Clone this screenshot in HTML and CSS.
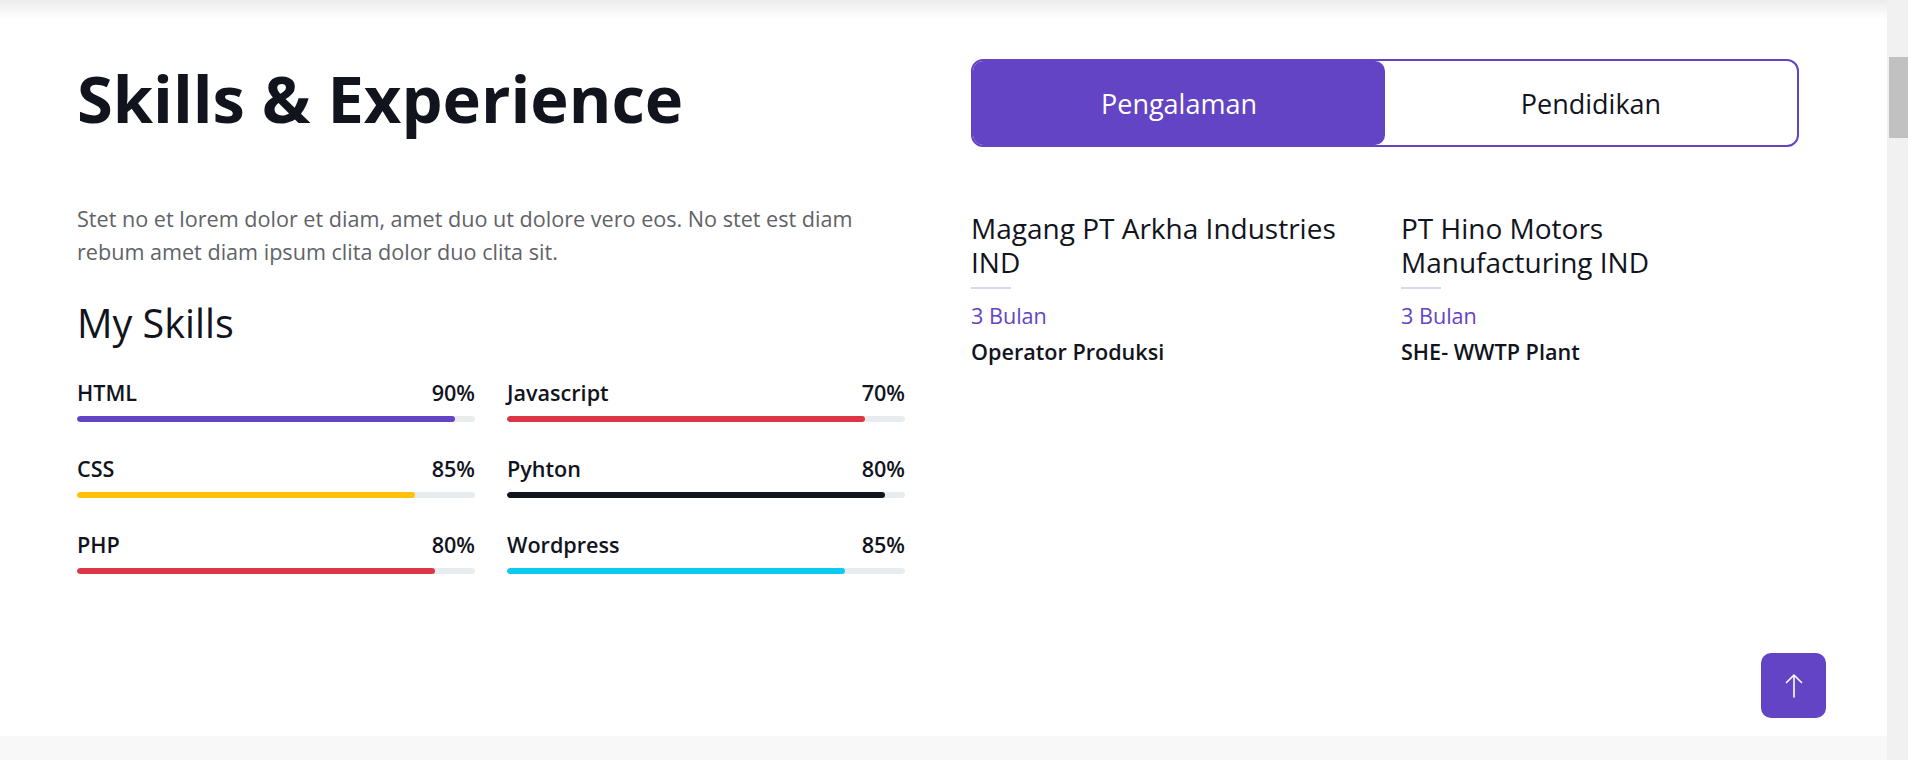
FILE: index.html
```html
<!DOCTYPE html>
<html lang="id">
<head>
<meta charset="utf-8">
<title>Skills &amp; Experience</title>
<link rel="stylesheet" href="styles.css">
</head>
<body>
<div class="viewport">
  <div class="page">
    <div class="topshade"></div>
    <section class="section">
      <div class="col-left">
        <h1 class="title">Skills &amp; Experience</h1>
        <p class="lead-text">Stet no et lorem dolor et diam, amet duo ut dolore vero eos. No stet est diam rebum amet diam ipsum clita dolor duo clita sit.</p>
        <h3 class="sub">My Skills</h3>
        <div class="skills">
          <div class="skill">
            <div class="skill-head"><span>HTML</span><span>90%</span></div>
            <div class="track"><div class="fill fill-primary" style="width:95%"></div></div>
          </div>
          <div class="skill">
            <div class="skill-head"><span>Javascript</span><span>70%</span></div>
            <div class="track"><div class="fill fill-danger" style="width:90%"></div></div>
          </div>
          <div class="skill">
            <div class="skill-head"><span>CSS</span><span>85%</span></div>
            <div class="track"><div class="fill fill-warning" style="width:85%"></div></div>
          </div>
          <div class="skill">
            <div class="skill-head"><span>Pyhton</span><span>80%</span></div>
            <div class="track"><div class="fill fill-dark" style="width:95%"></div></div>
          </div>
          <div class="skill">
            <div class="skill-head"><span>PHP</span><span>80%</span></div>
            <div class="track"><div class="fill fill-danger" style="width:90%"></div></div>
          </div>
          <div class="skill">
            <div class="skill-head"><span>Wordpress</span><span>85%</span></div>
            <div class="track"><div class="fill fill-info" style="width:85%"></div></div>
          </div>
        </div>
      </div>
      <div class="col-right">
        <div class="tabs">
          <button class="tab tab-active" type="button">Pengalaman</button>
          <button class="tab" type="button">Pendidikan</button>
        </div>
        <div class="jobs">
          <div class="job">
            <h5 class="job-title">Magang PT Arkha Industries IND</h5>
            <div class="job-rule"></div>
            <p class="job-dur">3 Bulan</p>
            <p class="job-role">Operator Produksi</p>
          </div>
          <div class="job">
            <h5 class="job-title">PT Hino Motors Manufacturing IND</h5>
            <div class="job-rule"></div>
            <p class="job-dur">3 Bulan</p>
            <p class="job-role">SHE- WWTP Plant</p>
          </div>
        </div>
      </div>
    </section>
    <div class="next-section"></div>
    <a class="back-top" href="#">
      <svg width="20" height="26" viewBox="0 0 20 26" fill="none" stroke="#fff" stroke-width="1.6" stroke-linecap="round" stroke-linejoin="round"><path d="M10 2V24M2.5 9.5L10 2L17.5 9.5"/></svg>
    </a>
  </div>
  <div class="scrollbar"><div class="thumb"></div></div>
</div>
</body>
</html>
```

FILE: styles.css
```css
html, body {
  margin: 0;
  padding: 0;
}
body {
  font-family: "Open Sans", "Noto Sans", sans-serif;
  color: #6c757d;
  background: #fff;
}
.viewport {
  display: flex;
  width: 1908px;
  height: 760px;
  overflow: hidden;
}
.page {
  position: relative;
  flex: 1;
  display: flex;
  flex-direction: column;
  background: #fff;
}
.topshade {
  position: absolute;
  left: 0;
  right: 0;
  top: 0;
  height: 20px;
  background: linear-gradient(to bottom, rgba(0,0,0,0.075), rgba(0,0,0,0));
  pointer-events: none;
}
.section {
  display: flex;
  gap: 66px;
  height: 736px;
  box-sizing: border-box;
  padding: 59px 0 0 77px;
}
.col-left, .col-right {
  width: 828px;
}
.title {
  margin: 0 0 65px;
  font-size: 65px;
  line-height: 78px;
  font-weight: 700;
  color: #12141d;
}
.lead-text {
  margin: 0 0 32px;
  font-size: 21.6px;
  line-height: 33px;
  color: #5f6368;
}
.sub {
  margin: 0 0 31px;
  font-size: 39.5px;
  line-height: 46px;
  font-weight: 500;
  color: #12141d;
}
.skills {
  display: grid;
  grid-template-columns: 1fr 1fr;
  column-gap: 32px;
  row-gap: 31px;
}
.skill-head {
  display: flex;
  justify-content: space-between;
  font-size: 21.6px;
  line-height: 32px;
  font-weight: 600;
  color: #12141d;
  margin-bottom: 7px;
}
.track {
  height: 6px;
  border-radius: 3px;
  background: #e9ecef;
  overflow: hidden;
}
.fill {
  height: 100%;
  border-radius: 3px;
}
.fill-primary { background: #6344c5; }
.fill-danger { background: #dc3545; }
.fill-warning { background: #ffc107; }
.fill-dark { background: #12141d; }
.fill-info { background: #0dcaf0; }
.tabs {
  display: flex;
  height: 88px;
  box-sizing: border-box;
  border: 2px solid #6344c5;
  border-radius: 12px;
}
.tab {
  flex: 1;
  border: 0;
  background: transparent;
  font-family: inherit;
  font-size: 27px;
  color: #12141d;
  border-radius: 10px;
  padding: 0;
  cursor: pointer;
}
.tab-active {
  background: #6344c5;
  color: #fff;
}
.jobs {
  display: grid;
  grid-template-columns: 1fr 1fr;
  column-gap: 32px;
  margin-top: 64px;
}
.job-title {
  margin: 0 0 8px;
  font-size: 28px;
  line-height: 34px;
  font-weight: 500;
  color: #12141d;
}
.job-rule {
  width: 40px;
  height: 2px;
  background: #dcd4f4;
  margin-bottom: 11px;
}
.job-dur {
  margin: 0 0 4px;
  font-size: 21.6px;
  line-height: 32px;
  color: #6344c5;
}
.job-role {
  margin: 0;
  font-size: 21.6px;
  line-height: 32px;
  font-weight: 600;
  color: #12141d;
}
.next-section {
  flex: 1;
  background: #f8f8f8;
}
.back-top {
  position: absolute;
  left: 1761px;
  top: 653px;
  width: 65px;
  height: 65px;
  border-radius: 10px;
  background: #6344c5;
  display: flex;
  align-items: center;
  justify-content: center;
}
.scrollbar {
  width: 21px;
  background: #f1f1f1;
  display: flex;
  flex-direction: column;
}
.thumb {
  margin: 57px 0 0 2px;
  width: 19px;
  height: 81px;
  background: #c1c1c1;
}
```
